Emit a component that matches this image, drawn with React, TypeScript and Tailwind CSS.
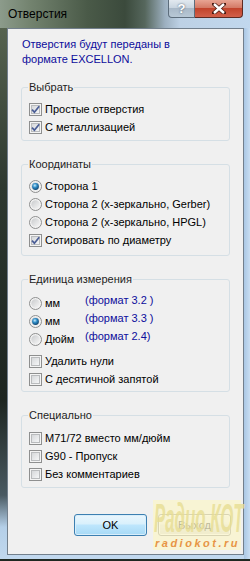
import { useId } from "react";

// ── Win7-style controls ──────────────────────────────────────────
function CheckBox({ checked = false }: { checked?: boolean }) {
  const id = useId();
  return (
    <svg width="13" height="13" viewBox="0 0 13 13" className="shrink-0">
      <defs>
        <linearGradient id={`${id}g`} x1="0" y1="0" x2="1" y2="1">
          <stop offset="0" stopColor="#d4d6d8" />
          <stop offset="1" stopColor="#f7f8f9" />
        </linearGradient>
      </defs>
      <rect x="0.5" y="0.5" width="12" height="12" fill="#f4f4f4" stroke="#8e8f8f" />
      <rect x="2.5" y="2.5" width="8" height="8" fill={`url(#${id}g)`} stroke="#b9bbbd" />
      {checked && (
        <path d="M3 6.6 L5.4 9.2 L10.2 3.2" fill="none" stroke="#4b5e96" strokeWidth="1.7" />
      )}
    </svg>
  );
}

function Radio({ checked = false }: { checked?: boolean }) {
  const id = useId();
  return (
    <svg width="13" height="13" viewBox="0 0 13 13" className="shrink-0">
      <defs>
        <linearGradient id={`${id}o`} x1="0" y1="0" x2="1" y2="1">
          <stop offset="0" stopColor="#c9cbcd" />
          <stop offset="1" stopColor="#f6f6f6" />
        </linearGradient>
        <radialGradient id={`${id}d`} cx="0.4" cy="0.35" r="0.7">
          <stop offset="0" stopColor="#c7ebfb" />
          <stop offset="0.45" stopColor="#2d8bc6" />
          <stop offset="1" stopColor="#0e3e66" />
        </radialGradient>
      </defs>
      <circle cx="6.5" cy="6.5" r="6" fill="#f2f2f2" stroke="#8e8f8f" />
      <circle cx="6.5" cy="6.5" r="4.2" fill={`url(#${id}o)`} />
      {checked && <circle cx="6.5" cy="6.5" r="3.4" fill={`url(#${id}d)`} />}
    </svg>
  );
}

function Row({ children }: { children: React.ReactNode }) {
  return <div className="flex h-[18px] items-center gap-[3px]">{children}</div>;
}

function Group({
  title,
  className = "",
  bodyClass = "",
  children,
}: {
  title: string;
  className?: string;
  bodyClass?: string;
  children: React.ReactNode;
}) {
  return (
    <fieldset className={`mx-[13px] rounded-[3px] border border-[#d5dfe5] px-[7px] ${className}`}>
      <legend className="-ml-[1px] px-[1px] leading-[13px] text-[#1e1e1e]">{title}</legend>
      <div className={`flex flex-col ${bodyClass}`}>{children}</div>
    </fieldset>
  );
}

function Button({ children, primary = false }: { children: React.ReactNode; primary?: boolean }) {
  return (
    <button
      className={
        primary
          ? "h-[22px] w-[73px] rounded-[3px] border border-[#3c7fb1] bg-[linear-gradient(#eaf6fd_0%,#d9f0fc_45%,#bee6fd_50%,#a7d9f5_100%)] text-[11px] text-black shadow-[inset_0_0_0_1px_#d8eefb]"
          : "h-[22px] w-[73px] rounded-[3px] border border-[#707070] bg-[linear-gradient(#f2f2f2_0%,#ebebeb_45%,#dddddd_50%,#cfcfcf_100%)] text-[11px] text-black shadow-[inset_0_0_0_1px_#fcfcfc]"
      }
    >
      {children}
    </button>
  );
}

export default function App() {
  return (
    <div className="relative h-[561px] w-[250px] overflow-hidden bg-[#1f2821] font-['Liberation_Sans',Arial,sans-serif] text-[11px] text-black">
      <div className="flex h-[559px] flex-col rounded-b-[6px] bg-[#c1d8ee]">
        {/* ── Title bar ───────────────────────────────────────── */}
        <div className="flex h-[28px] shrink-0 bg-[linear-gradient(to_right,#8c9b8b_0%,#73836f_12%,#4a5a48_35%,#3b4a3c_50%,#56675d_58%,#9db0c0_66%,#bdd1e5_72%,#c1d8ee_100%)]">
          <span className="ml-[8px] mt-[7px] text-[12px] leading-[15px] text-black">Отверстия</span>
          <div className="ml-auto mr-[7px] flex h-[18px] self-start">
            <div className="flex w-[27px] items-center justify-center rounded-bl-[4px] border border-t-0 border-[#5d6d7c] bg-[linear-gradient(#e2e9ef_0%,#c9d5e0_45%,#a9b9c8_50%,#b8c8d6_100%)] text-[13px] font-bold leading-none text-white [text-shadow:0_0_2px_#3e4e5e]">
              ?
            </div>
            <div className="flex w-[48px] items-center justify-center rounded-br-[4px] border border-l-0 border-t-0 border-[#5e2a22] bg-[linear-gradient(#e8a493_0%,#d47a66_45%,#c2442c_50%,#d2604a_100%)]">
              <svg width="14" height="11" viewBox="0 0 14 11">
                <path
                  d="M2 1 L12 10 M12 1 L2 10"
                  stroke="#4a1c14"
                  strokeWidth="4"
                  strokeLinecap="square"
                />
                <path d="M2 1 L12 10 M12 1 L2 10" stroke="#ffffff" strokeWidth="2.4" />
              </svg>
            </div>
          </div>
        </div>

        {/* ── Body ────────────────────────────────────────────── */}
        <div className="flex flex-1">
          <div className="w-[7px] shrink-0 bg-[linear-gradient(#56634f_0%,#2d382f_30%,#1d2520_70%,#4a5a62_88%,#b4cfe8_94%,#c1d8ee_100%)]" />
          <div className="flex h-[527px] w-[237px] flex-col border border-[#727f8c] bg-[#f0f0f0]">
            <p className="ml-[14px] mt-[8px] leading-[15px] text-[#0d0d9c]">
              Отверстия будут переданы в
              <br />
              формате EXCELLON.
            </p>

            <Group title="Выбрать" className="mt-[14px]" bodyClass="pt-[6px] pb-[4px]">
              <Row>
                <CheckBox checked />
                <span>Простые отверстия</span>
              </Row>
              <Row>
                <CheckBox checked />
                <span>С металлизацией</span>
              </Row>
            </Group>

            <Group title="Координаты" className="mt-[17px]" bodyClass="pt-[6px] pb-[6px]">
              <Row>
                <Radio checked />
                <span>Сторона 1</span>
              </Row>
              <Row>
                <Radio />
                <span>Сторона 2 (x-зеркально, Gerber)</span>
              </Row>
              <Row>
                <Radio />
                <span>Сторона 2 (x-зеркально, HPGL)</span>
              </Row>
              <Row>
                <CheckBox checked />
                <span>Сотировать по диаметру</span>
              </Row>
            </Group>

            <Group title="Единица измерения" className="mt-[17px]" bodyClass="pt-[8px] pb-[3px]">
              {[
                ["мм", "(формат 3.2 )", false],
                ["мм", "(формат 3.3 )", true],
                ["Дюйм", "(формат 2.4)", false],
              ].map(([unit, fmt, on], i) => (
                <Row key={i}>
                  <Radio checked={on as boolean} />
                  <span className="w-[37px]">{unit as string}</span>
                  <span className="mb-[6px] text-[#0d0d9c]">{fmt as string}</span>
                </Row>
              ))}
              <div className="mt-[4px]">
                <Row>
                  <CheckBox />
                  <span>Удалить нули</span>
                </Row>
                <Row>
                  <CheckBox />
                  <span>С десятичной запятой</span>
                </Row>
              </div>
            </Group>

            <Group title="Специально" className="mt-[17px]" bodyClass="pt-[7px] pb-[4px]">
              <Row>
                <CheckBox />
                <span>M71/72 вместо мм/дюйм</span>
              </Row>
              <Row>
                <CheckBox />
                <span>G90 - Пропуск</span>
              </Row>
              <Row>
                <CheckBox />
                <span>Без комментариев</span>
              </Row>
            </Group>

            <div className="mr-[12px] mt-[26px] flex justify-end gap-[11px]">
              <Button primary>OK</Button>
              <Button>Выход</Button>
            </div>
          </div>
          <div className="flex-1 bg-[linear-gradient(to_right,#aac7e4,#c9def2)]" />
        </div>
      </div>

      {/* ── Watermark ───────────────────────────────────────────── */}
      <div className="absolute left-[153px] top-[500px] flex h-[50px] w-[88px] flex-col bg-[#fbf6cb]/75">
        <span className="-mt-[2px] ml-[1px] h-[40px] w-[200px] origin-left scale-x-[0.42] whitespace-nowrap text-[40px] font-bold italic leading-[40px] text-[#e7dd92]/80">
          Радио КОТ
        </span>
        <span className="-mt-[1px] ml-[2px] whitespace-nowrap text-[11px] font-bold italic leading-[12px] tracking-[2.5px] text-[#e79545]">
          radiokot.ru
        </span>
      </div>
    </div>
  );
}
